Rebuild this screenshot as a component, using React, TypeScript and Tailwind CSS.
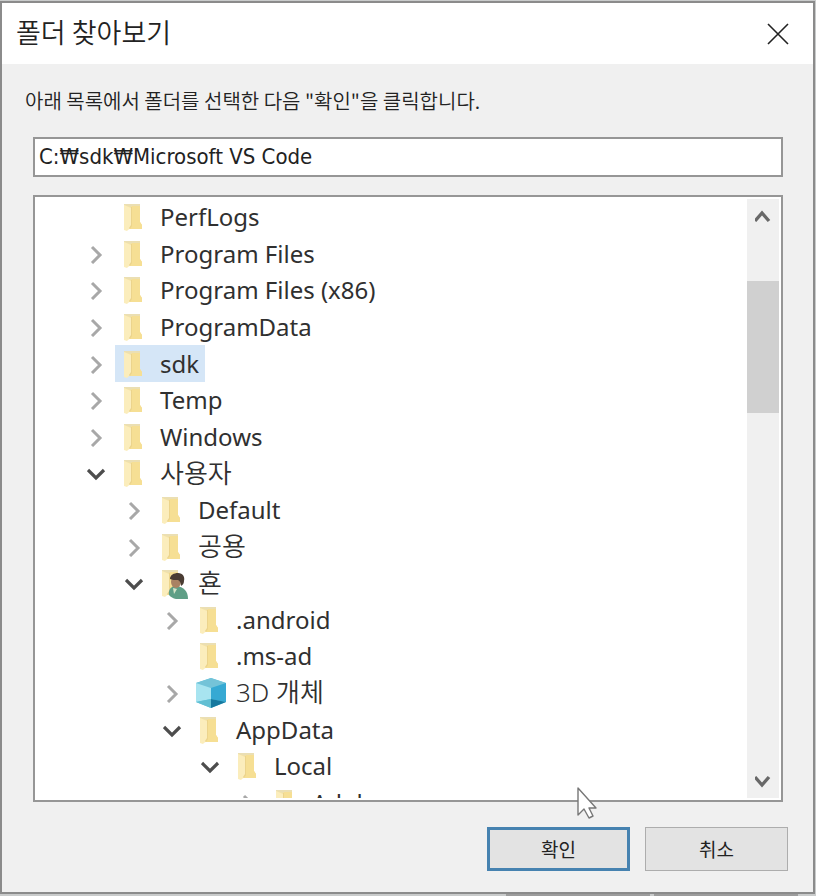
import React, { useState } from 'react';

type NodeState = 'open' | 'closed' | 'leaf';
type IconKind = 'folder' | 'user' | 'cube';

type TreeRow = {
  name: string;
  depth: number;
  state: NodeState;
  icon?: IconKind;
};

const INDENT = 38;

const rows: TreeRow[] = [
  { name: 'PerfLogs', depth: 0, state: 'leaf' },
  { name: 'Program Files', depth: 0, state: 'closed' },
  { name: 'Program Files (x86)', depth: 0, state: 'closed' },
  { name: 'ProgramData', depth: 0, state: 'closed' },
  { name: 'sdk', depth: 0, state: 'closed' },
  { name: 'Temp', depth: 0, state: 'closed' },
  { name: 'Windows', depth: 0, state: 'closed' },
  { name: '사용자', depth: 0, state: 'open' },
  { name: 'Default', depth: 1, state: 'closed' },
  { name: '공용', depth: 1, state: 'closed' },
  { name: '횬', depth: 1, state: 'open', icon: 'user' },
  { name: '.android', depth: 2, state: 'closed' },
  { name: '.ms-ad', depth: 2, state: 'leaf' },
  { name: '3D 개체', depth: 2, state: 'closed', icon: 'cube' },
  { name: 'AppData', depth: 2, state: 'open' },
  { name: 'Local', depth: 3, state: 'open' },
  { name: 'Adobe', depth: 4, state: 'closed' },
];

const hasHangul = (text: string) => /[가-힣]/.test(text);

const FolderShape = () => (
  <>
    <path d="M4 3h16v18l2 3v4H10L4 29z" fill="#f7e3a4" />
    <path d="M11 5h9v16l2 3v4H10z" fill="#f6df94" />
    <path d="M4 3h16v2h-8l-1 1-7-2z" fill="#ebdfb3" />
    <path d="M4 4l7 3v19l-4 4-3-1z" fill="#fbedbc" />
    <path d="M11 6h1v19l-2 3-1-1 2-3z" fill="#ecd48c" />
  </>
);

const NodeIcon: React.FC<{ kind: IconKind }> = ({ kind }) => {
  if (kind === 'cube') {
    return (
      <svg viewBox="0 0 32 32" className="size-8" aria-hidden="true">
        <path d="M15 1l15 5v19l-15 6-15-6V6z" fill="#5cc4de" />
        <path d="M15 1l15 5-15 5L0 6z" fill="#74c3d8" />
        <path d="M0 6l15 5v11L0 25z" fill="#a8e4f0" />
        <path d="M15 11l15-5v19l-15-3z" fill="#36a9d3" />
        <path d="M0 25l15-3v9z" fill="#62bfd3" />
        <path d="M15 22l15 3-15 6z" fill="#16799f" />
      </svg>
    );
  }

  return (
    <svg viewBox="0 0 32 32" className="size-8" aria-hidden="true">
      <FolderShape />
      {kind === 'user' && (
        <>
          <path d="M11 28c-1-5 2-9 7-9 8 1 12 5 12 13-7 1-15 1-19-4z" fill="#5f9f86" />
          <path d="M15 21l1 6 3-5z" fill="#d5e4c8" />
          <ellipse cx="18" cy="15" rx="5" ry="6" fill="#a98263" />
          <path d="M12 12c0-4 4-6 8-6 5 0 7 4 6 8 0 2-1 4-3 5 0-3-1-5-3-6-3 0-6 0-8-1z" fill="#4a3c33" />
        </>
      )}
    </svg>
  );
};

const Chevron: React.FC<{ open: boolean }> = ({ open }) => (
  <svg viewBox="0 0 20 20" className="size-5" fill="none" strokeWidth="3" aria-hidden="true">
    {open ? (
      <path d="M1 7l8 8 8-8" stroke="#4d4d4d" strokeWidth="3.2" />
    ) : (
      <path d="M5 3l8 8-8 8" stroke="#a8a8a8" />
    )}
  </svg>
);

const ScrollArrow: React.FC<{ direction: 'up' | 'down' }> = ({ direction }) => (
  <button
    type="button"
    aria-label={direction === 'up' ? '위로 스크롤' : '아래로 스크롤'}
    className="flex h-9 w-8 shrink-0 items-center justify-center"
  >
    <svg viewBox="0 0 16 16" className="size-4" fill="none" stroke="#686868" strokeWidth="3.4" aria-hidden="true">
      {direction === 'up' ? <path d="M0 12l7-8 7 8" /> : <path d="M0 5l7 8 7-8" />}
    </svg>
  </button>
);

export default function App() {
  const [path, setPath] = useState('C:₩sdk₩Microsoft VS Code');
  const [selected, setSelected] = useState('sdk');

  return (
    <div className="flex min-h-screen flex-col bg-[#c9cbcb] pt-px font-['Noto_Sans','Noto_Sans_CJK_KR',sans-serif] text-[#222]">
      <main className="mr-px flex flex-1 flex-col border-2 border-[#8b8b8b] bg-[#f0f0f0]">
        <header className="flex h-[61px] items-center justify-between bg-white pr-6 pl-[14px]">
          <h1 className="pb-0.5 font-['Noto_Sans_CJK_KR',sans-serif] text-[27px] font-[350]">폴더 찾아보기</h1>
          <button type="button" aria-label="닫기">
            <svg viewBox="0 0 22 22" className="size-[22px]" fill="none" stroke="#222" strokeWidth="1.6" aria-hidden="true">
              <path d="M1 1l20 20M21 1L1 21" />
            </svg>
          </button>
        </header>

        <div className="flex flex-1 flex-col pr-[30px] pl-[31px]">
          <label
            htmlFor="folder-path"
            className="-ml-2 flex h-[73px] items-center font-['Noto_Sans_CJK_KR',sans-serif] text-[20px] font-[350]"
          >
            아래 목록에서 폴더를 선택한 다음 "확인"을 클릭합니다.
          </label>
          <input
            id="folder-path"
            type="text"
            value={path}
            onChange={(e) => setPath(e.target.value)}
            className="h-10 w-full border-2 border-[#969696] bg-white px-1 pb-0.5 font-['DejaVu_Sans_Condensed','Noto_Sans_CJK_KR',sans-serif] text-[22px] outline-none"
          />

          <div className="mt-[18px] flex h-[607px] border-2 border-[#969696] bg-white py-0.5 pr-0.5">
            <div className="h-full flex-1 overflow-hidden">
              <ul role="tree" aria-label="폴더" className="grid h-[622px] auto-rows-fr">
                {rows.map((row) => (
                  <li
                    key={row.name}
                    role="treeitem"
                    aria-selected={row.name === selected}
                    className="flex items-stretch"
                    style={{ paddingLeft: row.depth * INDENT }}
                  >
                    <span className="flex w-20 items-center justify-end pr-2">
                      {row.state !== 'leaf' && (
                        <button type="button" aria-label={`${row.name} 확장`}>
                          <Chevron open={row.state === 'open'} />
                        </button>
                      )}
                    </span>
                    <button
                      type="button"
                      onClick={() => setSelected(row.name)}
                      className={`flex items-center gap-2 pr-1.5 pl-[5px] whitespace-nowrap text-[#303030] ${
                        hasHangul(row.name) ? 'text-[26px] font-[350]' : 'text-2xl'
                      } ${row.name === selected ? 'bg-[#d5e6f7]' : ''}`}
                    >
                      <NodeIcon kind={row.icon || 'folder'} />
                      {row.name}
                    </button>
                  </li>
                ))}
              </ul>
            </div>
            <div className="flex w-8 flex-col bg-[#f0f0f0]">
              <ScrollArrow direction="up" />
              <div className="flex-1 pt-[46px]">
                <div className="h-[132px] bg-[#d0d0d0]" />
              </div>
              <ScrollArrow direction="down" />
            </div>
          </div>

          <div className="-mr-[5px] mt-[25px] flex justify-end gap-[15px] font-['Noto_Sans_CJK_KR',sans-serif] text-[19px]">
            <button type="button" className="h-11 w-[143px] border-3 border-[#4682b0] bg-[#e3e3e3] leading-6">
              확인
            </button>
            <button type="button" className="h-11 w-[143px] border border-[#adadad] bg-[#e3e3e3] leading-6">
              취소
            </button>
          </div>
        </div>
      </main>

      {/* top edge of the window underneath */}
      <div className="flex h-0.5 justify-end gap-1 pr-[18px]">
        <span className="w-36 bg-[#9c9c9c]" />
        <span className="w-36 bg-[#9c9c9c]" />
      </div>

      <svg
        viewBox="0 0 24 36"
        className="pointer-events-none absolute top-[786px] left-[576px] h-9 w-6"
        aria-hidden="true"
      >
        <path
          d="M2 2v27l6-6 5 9 4-2-4-8h7z"
          fill="#fff"
          stroke="#777"
          strokeWidth="1.4"
          strokeLinejoin="round"
        />
      </svg>
    </div>
  );
}
